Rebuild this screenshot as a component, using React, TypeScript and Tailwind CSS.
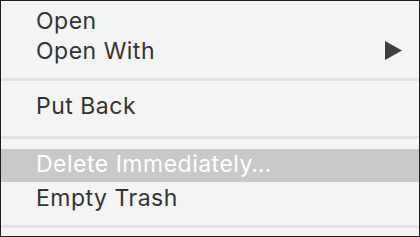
import React from "react";

const font = { fontFamily: "Inter, 'Liberation Sans', sans-serif" };

export default function App() {
  return (
    <div
      className="w-[420px] h-[237px] overflow-hidden border border-[#1e1e1e] bg-[#f4f4f4] text-[23px] text-[#333333] flex flex-col tracking-[0.5px]"
      style={font}
    >
      <div className="h-[5px]" />
      <div className="h-[30px] leading-[30px] pl-[35px]">Open</div>
      <div className="h-[30px] leading-[30px] pl-[35px] pr-[17px] flex items-center justify-between">
        <span>Open With</span>
        <svg width="17" height="19" viewBox="0 0 17 19" className="mt-[-2px]">
          <polygon points="0,0 17,9.5 0,19" fill="#3e3e3e" />
        </svg>
      </div>
      <div className="h-[12px]" />
      <div className="h-[3px] bg-[#e2e2e2]" />
      <div className="h-[10px]" />
      <div className="h-[31px] leading-[31px] pl-[35px]">Put Back</div>
      <div className="h-[14px]" />
      <div className="h-[3px] bg-[#e2e2e2]" />
      <div className="h-[10px]" />
      <div className="h-[33px] leading-[31px] pl-[35px] bg-[#c9c9c9] text-white">
        Delete Immediately…
      </div>
      <div className="h-[33px] leading-[33px] pl-[35px]">Empty Trash</div>
      <div className="h-[10px]" />
      <div className="h-[3px] bg-[#e2e2e2]" />
    </div>
  );
}
